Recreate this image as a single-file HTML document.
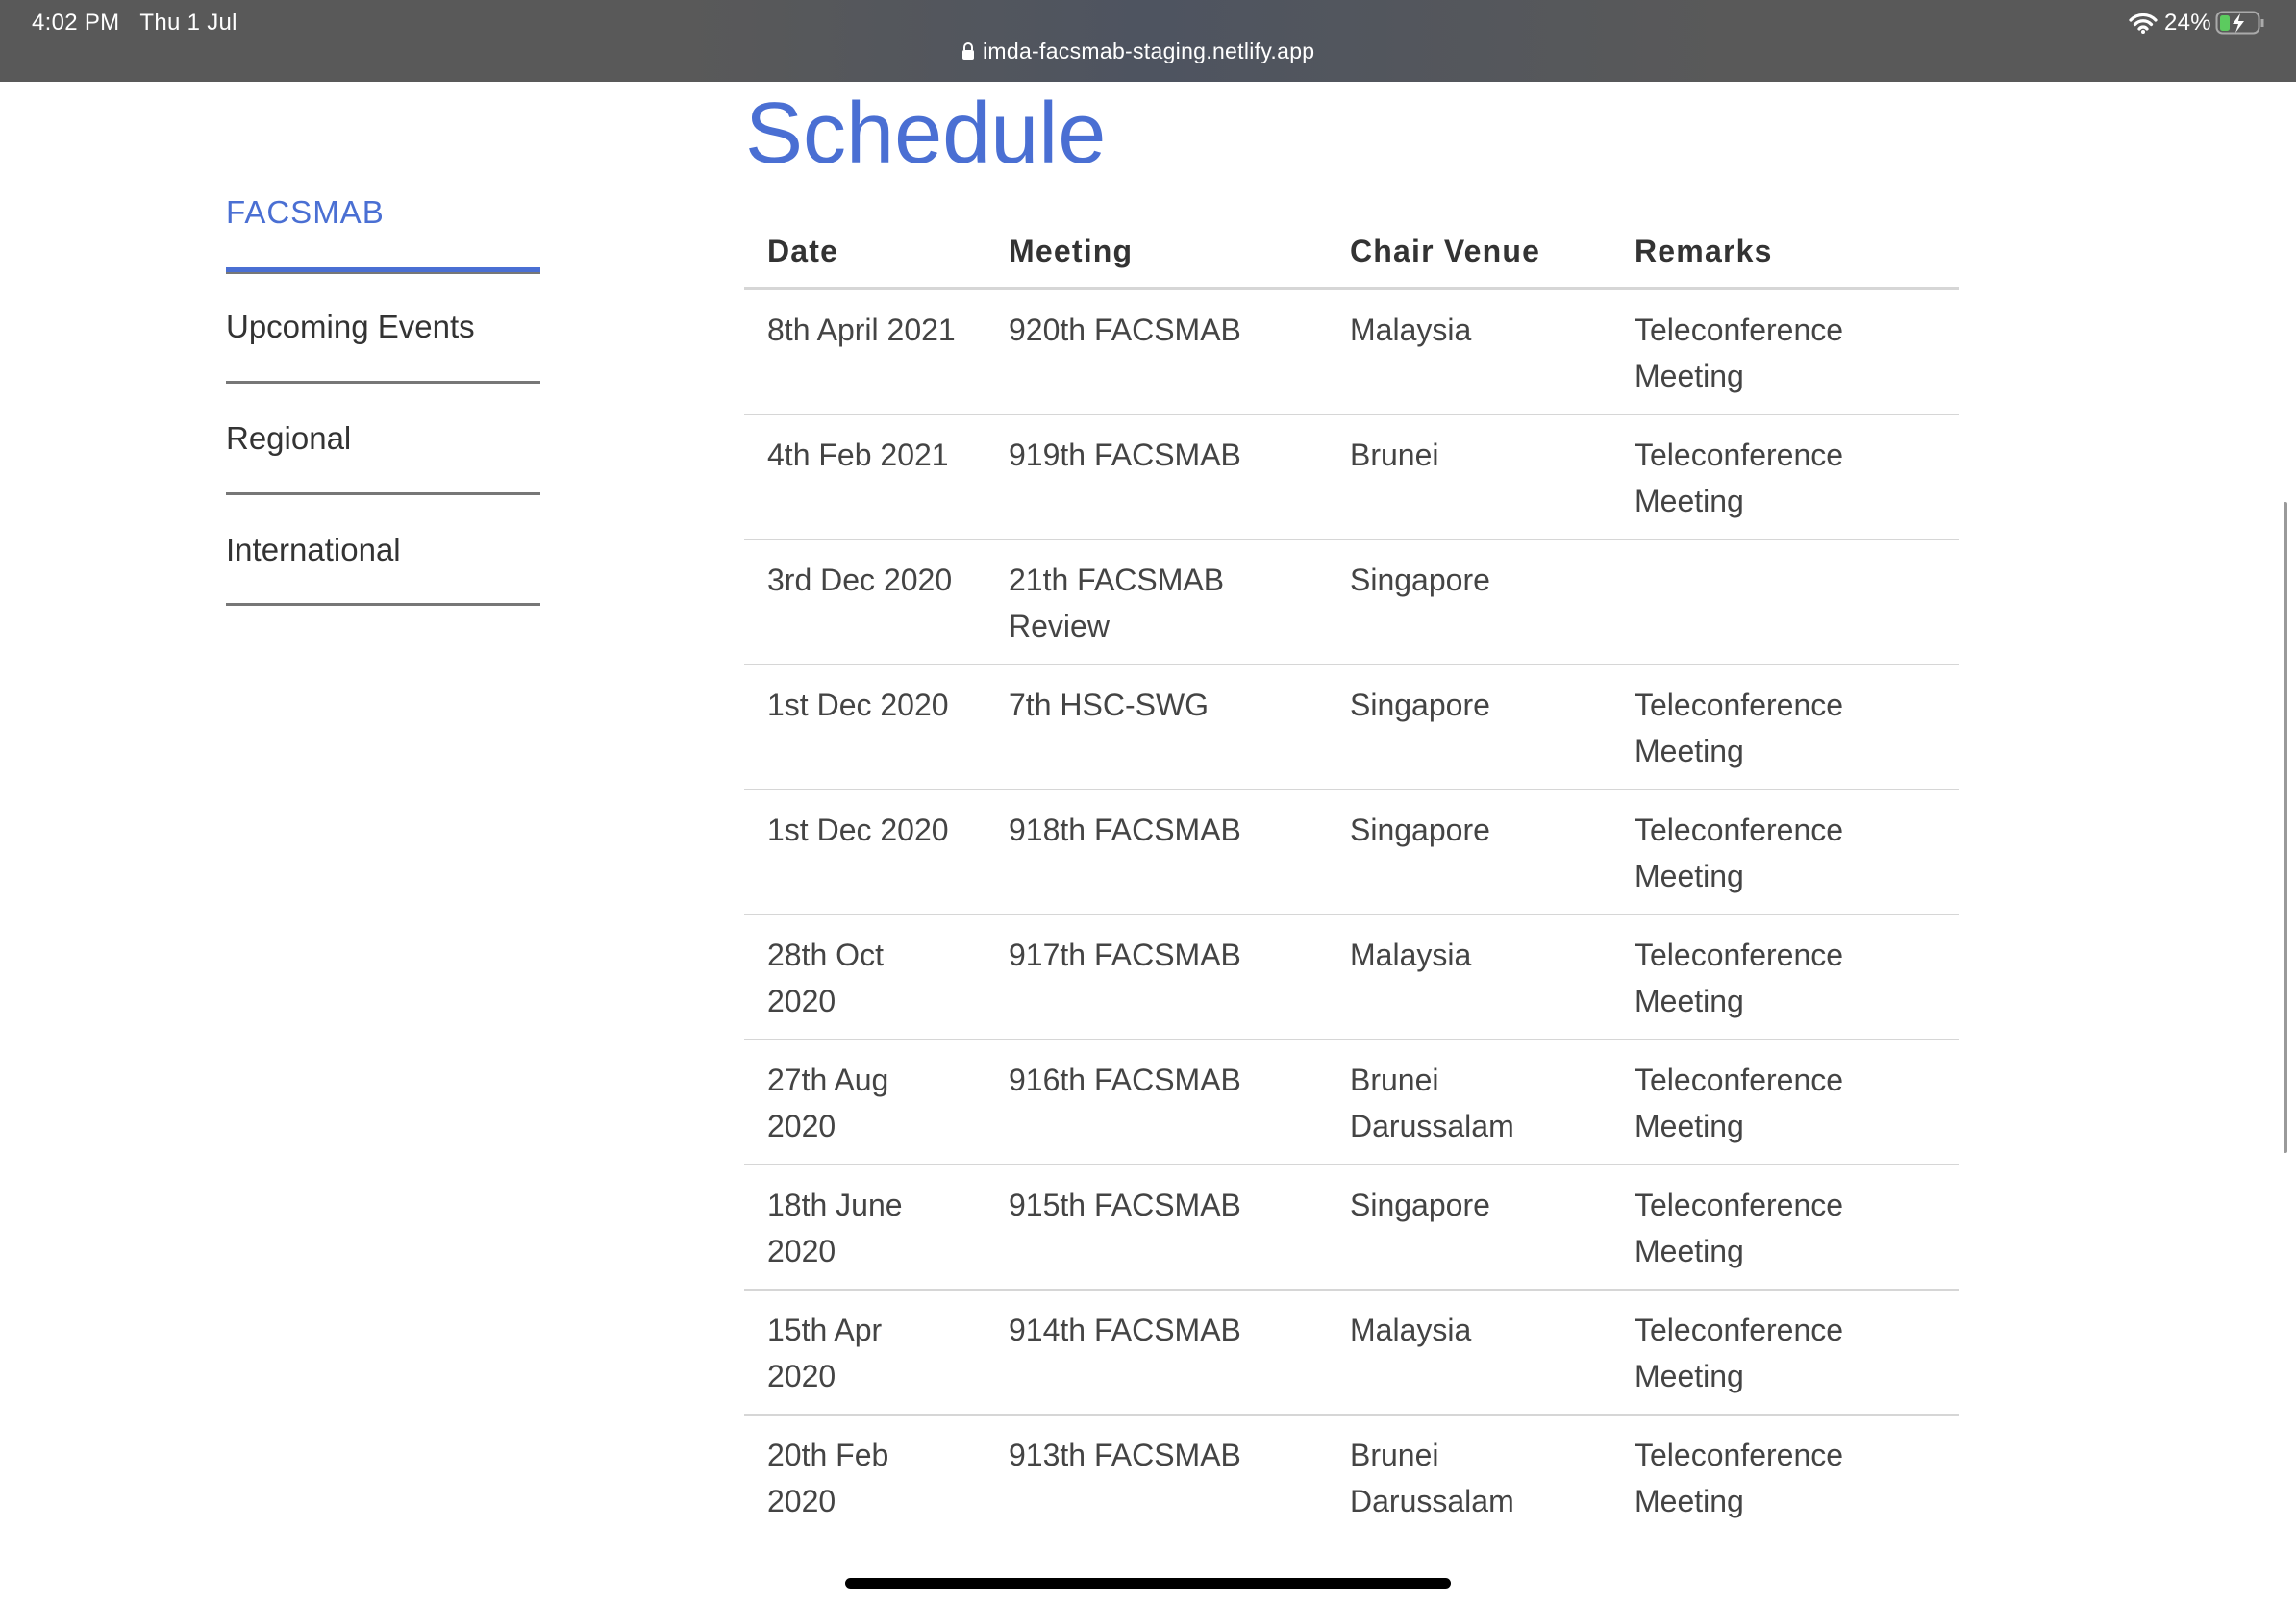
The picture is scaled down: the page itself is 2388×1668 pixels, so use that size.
<!DOCTYPE html>
<html><head><meta charset="utf-8"><style>
*{margin:0;padding:0;box-sizing:border-box}
body{width:2388px;height:1668px;background:#fff;position:relative;overflow:hidden;font-family:"Liberation Sans",sans-serif;color:#444}
.bar{position:absolute;left:0;top:0;width:2388px;height:85px;background:linear-gradient(90deg,#595959 0%,#595959 30%,#4e5460 50%,#595959 75%,#595959 100%);color:#fff}
.t{position:absolute;font-size:24px;letter-spacing:0.3px}
h1{position:absolute;left:775px;top:84px;font-size:90px;font-weight:normal;color:#4a6fd3;letter-spacing:0;line-height:110px}
.nav{position:absolute;left:235px;width:327px}
.nav div{position:absolute;left:0;width:327px;font-size:33px;color:#333}
.line{position:absolute;left:235px;width:327px;height:4px;background:#777}
table{position:absolute;left:774px;top:228px;width:1264px;border-collapse:collapse}
th{text-align:left;font-size:32px;font-weight:bold;color:#333;letter-spacing:1.2px;height:72px;padding:0 0 4px 24px;border-bottom:4px solid #d6d6d6;vertical-align:middle}
td{font-size:32px;line-height:48px;padding:17px 10px 15px 24px;height:128.3px;vertical-align:top;border-bottom:2px solid #d6d6d6;color:#444}
tr:last-child td{border-bottom:none}
</style></head><body>
<div class="bar">
<div class="t" style="left:33px;top:10px">4:02 PM&nbsp;&nbsp;&nbsp;Thu 1 Jul</div>
<div class="t" style="left:1000px;top:40px;font-size:23px"><svg width="14" height="20" viewBox="0 0 14 20" style="vertical-align:-2px;margin-right:8px"><path d="M3 9V6a4 4 0 0 1 8 0v3" stroke="#fff" stroke-width="2" fill="none"/><rect x="1" y="9" width="12" height="10" rx="2" fill="#fff"/></svg>imda-facsmab-staging.netlify.app</div>
<svg style="position:absolute;left:2214px;top:13px" width="30" height="22" viewBox="0 0 30 22"><path d="M2 8a18 18 0 0 1 26 0M6.5 12.5a11.5 11.5 0 0 1 17 0M11 17a5 5 0 0 1 8 0" stroke="#fff" stroke-width="3.2" fill="none" stroke-linecap="round"/><circle cx="15" cy="20" r="2" fill="#fff"/></svg>
<div class="t" style="left:2251px;top:10px">24%</div>
<svg style="position:absolute;left:2304px;top:11px" width="54" height="26" viewBox="0 0 54 26"><rect x="1.5" y="1.5" width="44" height="22" rx="6" fill="none" stroke="#aaa" stroke-width="2"/><rect x="5" y="5" width="10" height="16" rx="2.5" fill="#5ccb5f"/><path d="M49 9v8" stroke="#aaa" stroke-width="3"/><path d="M26 3l-8 11h6l-3 9 9-12h-6z" fill="#fff"/></svg>
</div>
<h1>Schedule</h1>
<div class="nav" style="top:3px">
<div style="top:199px;color:#4a6fd3;letter-spacing:1px">FACSMAB</div>
<div style="top:318px">Upcoming Events</div>
<div style="top:434px">Regional</div>
<div style="top:550px">International</div>
</div>
<div class="line" style="top:278px;height:5px;background:#4a6fd3"></div>
<div class="line" style="top:283px;height:2px;background:#777"></div>
<div class="line" style="top:396px;height:3px"></div>
<div class="line" style="top:512px;height:3px"></div>
<div class="line" style="top:627px;height:3px"></div>
<table>
<colgroup><col style="width:251px"><col style="width:355px"><col style="width:296px"><col></colgroup>
<tr><th>Date</th><th>Meeting</th><th>Chair Venue</th><th>Remarks</th></tr>
<tr><td>8th April 2021</td><td>920th FACSMAB</td><td>Malaysia</td><td>Teleconference<br>Meeting</td></tr>
<tr><td>4th Feb 2021</td><td>919th FACSMAB</td><td>Brunei</td><td>Teleconference<br>Meeting</td></tr>
<tr><td>3rd Dec 2020</td><td>21th FACSMAB<br>Review</td><td>Singapore</td><td></td></tr>
<tr><td>1st Dec 2020</td><td>7th HSC-SWG</td><td>Singapore</td><td>Teleconference<br>Meeting</td></tr>
<tr><td>1st Dec 2020</td><td>918th FACSMAB</td><td>Singapore</td><td>Teleconference<br>Meeting</td></tr>
<tr><td>28th Oct<br>2020</td><td>917th FACSMAB</td><td>Malaysia</td><td>Teleconference<br>Meeting</td></tr>
<tr><td>27th Aug<br>2020</td><td>916th FACSMAB</td><td>Brunei<br>Darussalam</td><td>Teleconference<br>Meeting</td></tr>
<tr><td>18th June<br>2020</td><td>915th FACSMAB</td><td>Singapore</td><td>Teleconference<br>Meeting</td></tr>
<tr><td>15th Apr<br>2020</td><td>914th FACSMAB</td><td>Malaysia</td><td>Teleconference<br>Meeting</td></tr>
<tr><td>20th Feb<br>2020</td><td>913th FACSMAB</td><td>Brunei<br>Darussalam</td><td>Teleconference<br>Meeting</td></tr>
</table>
<div style="position:absolute;left:2375px;top:522px;width:4px;height:677px;border-radius:2px;background:#9a9a9a"></div>
<div style="position:absolute;left:879px;top:1641px;width:630px;height:11px;border-radius:6px;background:#000"></div>
</body></html>
